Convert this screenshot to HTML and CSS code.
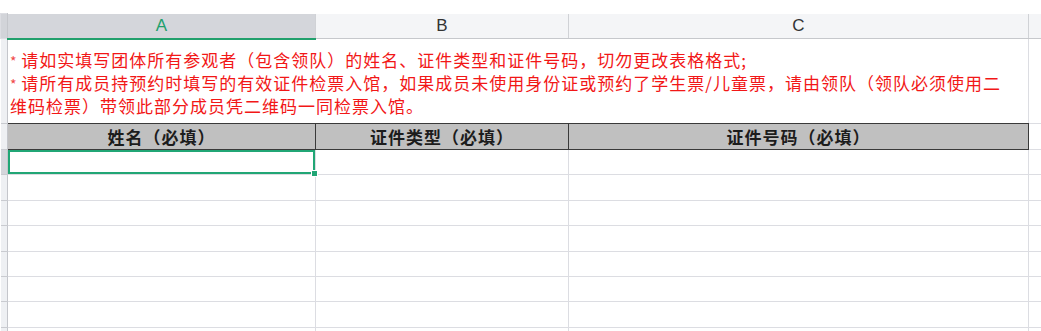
FILE: index.html
```html
<!DOCTYPE html>
<html>
<head>
    <meta charset="utf-8">
    <meta name="viewport" content="width=device-width, initial-scale=1">
    <title>团体预约名单</title>
    <link rel="stylesheet" href="styles.css">
</head>
<body>
    <main class="sheet-view">
        <table class="sheet">
            <colgroup>
                <col class="sheet__col sheet__col--index">
                <col class="sheet__col sheet__col--a">
                <col class="sheet__col sheet__col--b">
                <col class="sheet__col sheet__col--c">
                <col class="sheet__col sheet__col--d">
            </colgroup>
            <thead>
                <tr class="sheet__letters">
                    <th class="sheet__corner"></th>
                    <th class="sheet__letter sheet__letter--active">A</th>
                    <th class="sheet__letter">B</th>
                    <th class="sheet__letter">C</th>
                    <th class="sheet__letter"></th>
                </tr>
            </thead>
            <tbody>
                <tr class="sheet__row sheet__row--note">
                    <th class="sheet__index"></th>
                    <td class="sheet__note" colspan="3">
                        <span class="sheet__star">*</span>&nbsp;请如实填写团体所有参观者（包含领队）的姓名、证件类型和证件号码，切勿更改表格格式;<br>
                        <span class="sheet__star">*</span>&nbsp;请所有成员持预约时填写的有效证件检票入馆，如果成员未使用身份证或预约了学生票/儿童票，请由领队（领队必须使用二维码检票）带领此部分成员凭二维码一同检票入馆。
                    </td>
                    <td class="sheet__cell"></td>
                </tr>
                <tr class="sheet__row sheet__row--title">
                    <th class="sheet__index"></th>
                    <td class="sheet__title">姓名（必填）</td>
                    <td class="sheet__title">证件类型（必填）</td>
                    <td class="sheet__title">证件号码（必填）</td>
                    <td class="sheet__cell"></td>
                </tr>
                <tr class="sheet__row">
                    <th class="sheet__index sheet__index--active"></th>
                    <td class="sheet__cell sheet__cell--active"></td>
                    <td class="sheet__cell"></td>
                    <td class="sheet__cell"></td>
                    <td class="sheet__cell"></td>
                </tr>
                <tr class="sheet__row"><th class="sheet__index"></th><td class="sheet__cell"></td><td class="sheet__cell"></td><td class="sheet__cell"></td><td class="sheet__cell"></td></tr>
                <tr class="sheet__row"><th class="sheet__index"></th><td class="sheet__cell"></td><td class="sheet__cell"></td><td class="sheet__cell"></td><td class="sheet__cell"></td></tr>
                <tr class="sheet__row"><th class="sheet__index"></th><td class="sheet__cell"></td><td class="sheet__cell"></td><td class="sheet__cell"></td><td class="sheet__cell"></td></tr>
                <tr class="sheet__row"><th class="sheet__index"></th><td class="sheet__cell"></td><td class="sheet__cell"></td><td class="sheet__cell"></td><td class="sheet__cell"></td></tr>
                <tr class="sheet__row"><th class="sheet__index"></th><td class="sheet__cell"></td><td class="sheet__cell"></td><td class="sheet__cell"></td><td class="sheet__cell"></td></tr>
                <tr class="sheet__row"><th class="sheet__index"></th><td class="sheet__cell"></td><td class="sheet__cell"></td><td class="sheet__cell"></td><td class="sheet__cell"></td></tr>
                <tr class="sheet__row"><th class="sheet__index"></th><td class="sheet__cell"></td><td class="sheet__cell"></td><td class="sheet__cell"></td><td class="sheet__cell"></td></tr>
            </tbody>
        </table>
    </main>
</body>
</html>
```

FILE: styles.css
```css
html, body {
    margin: 0;
    padding: 0;
    background-color: #fff;
    overflow: hidden;
}

.sheet-view {
    padding-top: 13px;
    width: 1041px;
    height: 318px;
    overflow: hidden;
}

.sheet {
    border-collapse: collapse;
    table-layout: fixed;
    width: 1128px;
    font-family: "Noto Sans CJK SC", "Noto Sans", sans-serif;
}

.sheet__col--index { width: 7px; }
.sheet__col--a { width: 308px; }
.sheet__col--b { width: 253px; }
.sheet__col--c { width: 460px; }
.sheet__col--d { width: 100px; }

.sheet th,
.sheet td {
    padding: 0;
    border: 1px solid #dcdde2;
}

/* column letters */
.sheet__letters {
    height: 25px;
}
.sheet__corner {
    background-color: #d2d4d9;
    border-right-color: #c4c6cb !important;
}
.sheet__letter {
    background-color: #f4f5f7;
    border-top: none !important;
    border-bottom: 1px solid #c6c8cc !important;
    border-left-color: #d0d2d6 !important;
    border-right-color: #d0d2d6 !important;
    font-family: "Liberation Sans", Arial, sans-serif;
    font-size: 17px;
    font-weight: normal;
    color: #333;
    text-align: center;
    vertical-align: middle;
    line-height: 24px;
}
.sheet__letter--active {
    background-color: #d4d6db;
    color: #21a06c;
    border-bottom: 2px solid #21a06c !important;
}

/* row index column */
.sheet__index {
    background-color: #eef0f3;
    border-left: none !important;
    border-right-color: #c4c6cb !important;
    border-top-color: #c9cbd0 !important;
    border-bottom-color: #c9cbd0 !important;
}
.sheet__index--active {
    background-color: #d4d6db;
}

/* rows */
.sheet__row {
    height: 25.4px;
}
.sheet__row--note {
    height: 85px;
}
.sheet__row--title {
    height: 26px;
}

.sheet__note {
    vertical-align: bottom;
    padding: 0 24px 6px 2px !important;
    font-size: 17px;
    letter-spacing: 1px;
    line-height: 22px;
    color: #f21717;
    border-bottom: 1px solid #3a3a3a !important;
}
.sheet__star {
    font-size: 14px;
    letter-spacing: 0;
    color: #f04848;
}

.sheet__title {
    background-color: #c0c0c0;
    border: 1px solid #3a3a3a !important;
    font-size: 17px;
    font-weight: 700;
    letter-spacing: 1px;
    color: #1c1c1c;
    text-align: center;
    vertical-align: middle;
    line-height: 24px;
}

.sheet__cell--active {
    position: relative;
    box-shadow: inset 0 0 0 2px #21a675;
}
.sheet__cell--active::after {
    content: '';
    position: absolute;
    right: -3px;
    bottom: -3px;
    width: 5px;
    height: 5px;
    background-color: #21a675;
    border: 1px solid #fff;
}
```
